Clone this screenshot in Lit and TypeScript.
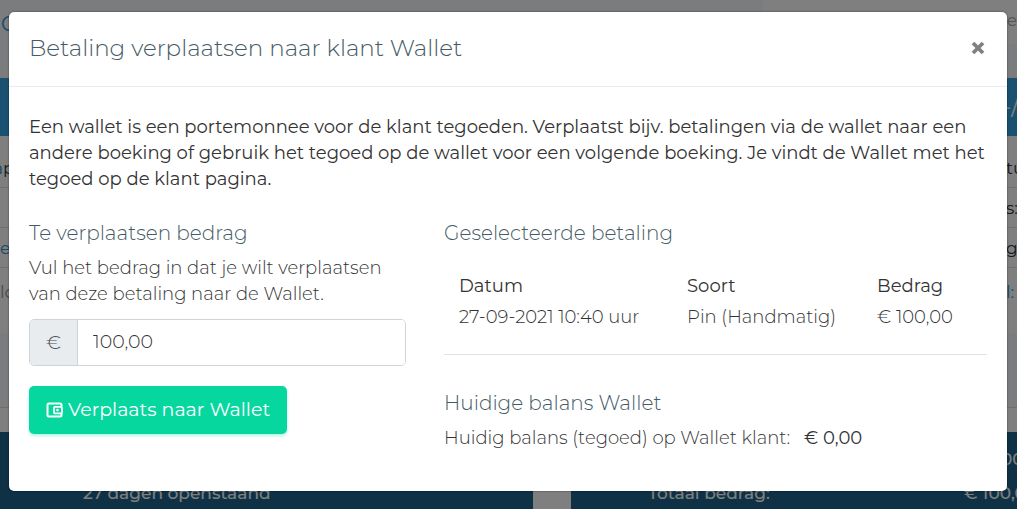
import { LitElement, html, css } from "lit";
import { customElement, state } from "lit/decorators.js";

const FONT = css`Montserrat, Inter, "Open Sans", sans-serif`;

/* The booking page that stays visible, dimmed, around the dialog. */
@customElement("booking-page")
class BookingPage extends LitElement {
  static styles = css`
    :host { display: block; background: #f6f8fc; color: #333; font: 400 17px/26px ${FONT}; white-space: nowrap; }
    .top { display: flex; height: 44px; }
    .brand { flex: 3; padding: 11px 0 0 1px; color: #2f94cc; font-size: 20px; overflow: hidden; }
    .menu { flex: 1; background: #fff; color: #aaa; text-align: right; padding-top: 7px; }
    .space { height: 34px; }
    .line { display: flex; justify-content: space-between; align-items: center; overflow: hidden; box-sizing: border-box; height: 40px; background: #fff; border-bottom: 1px solid #dfe1e4; }
    .line span:last-child { width: 11px; }
    .line.blue { height: 58px; background: #37a2e0; color: #fff; font-size: 24px; border: 0; }
    .line.blue span:last-child { width: 15px; }
    .line.first { height: 52px; padding-top: 12px; }
    .line.last { height: 65px; padding-bottom: 18px; border: 0; }
    .clipped { text-indent: -7px; }
    .link { color: #2f94cc; }
    .muted { color: #999; }
    .band { height: 74px; border-bottom: 1px solid #dcdee2; }
    .totals { display: grid; grid-template-columns: 533fr 446fr; gap: 38px; padding-top: 24px; background: #fff; color: #fff; font-weight: 500; }
    .card { background: #1c628c; padding: 14px 0 0 77px; height: 88px; }
    .card div { display: flex; justify-content: space-between; height: 34px; }
    .card .left { padding-left: 6px; }
    .card .right { width: 53px; }
    .card .bold { width: 16px; }
  `;
  render() {
    return html`
      <div class="top"><div class="brand">C</div><div class="menu">ve</div></div>
      <div class="space"></div>
      <div class="line blue"><span></span><span>-/</span></div>
      <div class="line first"><span class="clipped"><span class="link">a</span>p</span><span>tu</span></div>
      <div class="line"><span></span><span>s:</span></div>
      <div class="line"><span class="link">e</span><span>g</span></div>
      <div class="line last"><span class="muted">ld</span><span class="link">l:</span></div>
      <div class="band"></div>
      <div class="totals">
        <div class="card"><div></div><div class="left">27 dagen openstaand</div></div>
        <div class="card">
          <div><span></span><span class="bold">00</span></div>
          <div><span>Totaal bedrag:</span><span class="right">€ 100,00</span></div>
        </div>
      </div>
    `;
  }
}

@customElement("app-root")
class AppRoot extends LitElement {
  static styles = css`
    :host { display: block; position: relative; height: 100vh; overflow: hidden; font: 300 18px/26px ${FONT}; color: #333; }
    * { box-sizing: border-box; }
    .overlay { position: absolute; inset: 0; padding: 12px 10px 0 9px; background: rgba(0, 0, 0, 0.5); }
    .dialog { background: #fff; border-radius: 5px; box-shadow: 0 0 2px rgba(0, 0, 0, 0.6); }
    header { display: flex; justify-content: space-between; align-items: center; height: 75px; padding: 0 20px 2px; border-bottom: 1px solid #e9ecef; }
    h2, h3, p { margin: 0; font-weight: 300; color: #455a64; }
    h2 { font-size: 23px; line-height: 32px; }
    h3 { font-size: 20px; line-height: 24px; margin-bottom: 10px; }
    p { color: #333; }
    .close { border: 0; background: none; padding: 0; width: 18px; height: 24px; display: grid; place-items: center; }
    .body { padding: 27px 20px 40px; }
    .intro { font-weight: 400; }
    .columns { display: grid; grid-template-columns: repeat(12, minmax(0, 1fr)); column-gap: 38px; margin-top: 29px; }
    .amount { grid-column: span 5; }
    .payment { grid-column: span 7; }
    .group { display: flex; height: 47px; margin: 12px 0 20px; border: 1px solid #ced4da; border-radius: 5px; overflow: hidden; font-size: 19px; }
    .group label { display: grid; place-items: center; width: 48px; background: #e9ecef; border-right: 1px solid #ced4da; color: #495057; }
    .group input { flex: 1; min-width: 0; border: 0; outline: 0; padding: 0 15px 2px; font: inherit; color: #333; }
    .move { display: flex; align-items: center; gap: 5px; height: 48px; padding: 0 17px; border: 0; border-radius: 5px; background: #06d79f; color: #fff; font: 400 19px/26px ${FONT}; box-shadow: 0 2px 3px rgba(6, 215, 159, 0.3); }
    .move svg { width: 17px; height: 17px; }
    table { width: 100%; border-collapse: collapse; table-layout: fixed; margin: 28px 0 19px; }
    th, td { padding: 0 0 5px 15px; text-align: left; white-space: nowrap; }
    th { font-weight: 400; }
    .date { width: 42%; }
    .kind { width: 35%; }
    hr { border: 0; border-top: 1px solid #e2e2e2; margin: 0 0 36px; }
    .balance { display: flex; gap: 14px; }
    .balance strong { font-weight: 400; }
  `;

  @state() amount = "100,00";

  render() {
    return html`
      <booking-page></booking-page>
      <div class="overlay">
        <div class="dialog" role="dialog" aria-labelledby="title">
          <header>
            <h2 id="title">Betaling verplaatsen naar klant Wallet</h2>
            <button class="close" aria-label="Sluiten">
              <svg width="14" height="14" viewBox="0 0 14 14" stroke="#808080" stroke-width="3.8"><path d="M2 2 12 12M12 2 2 12" /></svg>
            </button>
          </header>
          <div class="body">
            <p class="intro">Een wallet is een portemonnee voor de klant tegoeden. Verplaatst bijv. betalingen via de wallet naar een andere boeking of gebruik het tegoed op de wallet voor een volgende boeking. Je vindt de Wallet met het tegoed op de klant pagina.</p>
            <div class="columns">
              <section class="amount">
                <h3>Te verplaatsen bedrag</h3>
                <p>Vul het bedrag in dat je wilt verplaatsen van deze betaling naar de Wallet.</p>
                <div class="group">
                  <label for="amount">€</label>
                  <input id="amount" type="text" .value=${this.amount} @input=${(e: Event) => (this.amount = (e.target as HTMLInputElement).value)} />
                </div>
                <button class="move">
                  <svg viewBox="0 0 17 17" fill="none" stroke="#fff" stroke-width="2"><path d="M15.5 4.5V3Q15.5 1.5 14 1.5H3Q1.5 1.5 1.5 3V13Q1.5 14.5 3 14.5H14Q15.5 14.5 15.5 13V11.5" /><rect x="8" y="4.8" width="8" height="6.6" rx="1" stroke-width="1.8" /><circle cx="11.5" cy="8.1" r="1.3" fill="#fff" stroke="none" /></svg>
                  Verplaats naar Wallet
                </button>
              </section>
              <section class="payment">
                <h3>Geselecteerde betaling</h3>
                <table>
                  <thead><tr><th class="date">Datum</th><th class="kind">Soort</th><th>Bedrag</th></tr></thead>
                  <tbody><tr><td>27-09-2021 10:40 uur</td><td>Pin (Handmatig)</td><td>€ 100,00</td></tr></tbody>
                </table>
                <hr />
                <h3>Huidige balans Wallet</h3>
                <div class="balance"><span>Huidig balans (tegoed) op Wallet klant:</span><strong>€ 0,00</strong></div>
              </section>
            </div>
          </div>
        </div>
      </div>
    `;
  }
}
